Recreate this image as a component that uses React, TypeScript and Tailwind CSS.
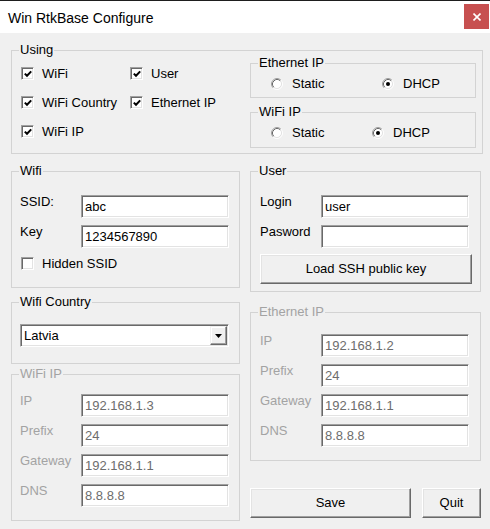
import React from "react";

const FONT = "font-['Liberation_Sans',Arial,sans-serif]";

const GroupBox = ({
  title,
  disabled = false,
  className = "",
  children,
}: {
  title: string;
  disabled?: boolean;
  className?: string;
  children: React.ReactNode;
}) => (
  <fieldset className={`border border-[#d3d3d3] min-w-0 ${className}`}>
    <legend
      className={`ml-[7px] px-[1px] text-[13px] leading-[14px] ${disabled ? "text-[#a3a3a3]" : "text-black"}`}
    >
      {title}
    </legend>
    {children}
  </fieldset>
);

const CheckBox = ({ checked }: { checked: boolean }) => (
  <span className="w-[13px] h-[13px] shrink-0 bg-white border border-t-[#a0a0a0] border-l-[#a0a0a0] border-r-white border-b-white shadow-[inset_1px_1px_0_#696969,inset_-1px_-1px_0_#e3e3e3] flex items-center justify-center">
    {checked && (
      <svg width="8" height="8" viewBox="0 0 8 8" className="ml-[1px] mt-[1px]">
        <path d="M0.8 3.6 L3 5.8 L7.2 1.4" fill="none" stroke="#000" strokeWidth="2" />
      </svg>
    )}
  </span>
);

const Radio = ({ checked }: { checked: boolean }) => (
  <svg width="12" height="12" viewBox="0 0 12 12" className="shrink-0">
    <circle cx="6" cy="6" r="4.5" fill="#fff" />
    <path d="M2.11 9.89 A5.5 5.5 0 0 1 9.89 2.11" fill="none" stroke="#a0a0a0" />
    <path d="M9.89 2.11 A5.5 5.5 0 0 1 2.11 9.89" fill="none" stroke="#ffffff" />
    <path d="M2.82 9.18 A4.5 4.5 0 0 1 9.18 2.82" fill="none" stroke="#696969" />
    <path d="M9.18 2.82 A4.5 4.5 0 0 1 2.82 9.18" fill="none" stroke="#e3e3e3" />
    {checked && <circle cx="6" cy="6" r="2" fill="#000" />}
  </svg>
);

const Edit = ({
  value = "",
  disabled = false,
  className = "",
}: {
  value?: string;
  disabled?: boolean;
  className?: string;
}) => (
  <div
    className={`h-[23px] bg-white border border-t-[#a0a0a0] border-l-[#a0a0a0] border-r-white border-b-white shadow-[inset_1px_1px_0_#696969,inset_-1px_-1px_0_#e3e3e3] pl-[3px] text-[13px] leading-[21px] whitespace-nowrap overflow-hidden ${disabled ? "text-[#6d6d6d]" : "text-black"} ${className}`}
  >
    {value}
  </div>
);

const Button = ({ label, className = "" }: { label: string; className?: string }) => (
  <button
    className={`h-[30px] bg-[#f0f0f0] border border-t-white border-l-white border-r-[#696969] border-b-[#696969] shadow-[inset_-1px_-1px_0_#a0a0a0,inset_1px_1px_0_#e3e3e3] text-[13px] text-black leading-[28px] ${className}`}
  >
    {label}
  </button>
);

const FieldRow = ({
  label,
  value,
  disabled = false,
  className = "",
}: {
  label: string;
  value: string;
  disabled?: boolean;
  className?: string;
}) => (
  <div className={`flex items-start ${className}`}>
    <span
      className={`w-[61px] shrink-0 text-[13px] leading-[13px] whitespace-nowrap ${disabled ? "text-[#a3a3a3]" : "text-black"}`}
    >
      {label}
    </span>
    <Edit value={value} disabled={disabled} className="w-[148px]" />
  </div>
);

const App = () => {
  return (
    <div className={`w-[490px] h-[529px] bg-[#f0f0f0] overflow-hidden text-black ${FONT}`}>
      {/* Title bar */}
      <div className="h-[33px] bg-white border-t border-[#1e1e1e] flex items-start justify-between">
        <span className="pl-2 pt-[8px] text-[14px] leading-[18px]">Win RtkBase Configure</span>
        <div className="mt-[3px] mr-[1px] w-[25px] h-[25px] bg-[#c75050] flex items-center justify-center">
          <svg width="8" height="8" viewBox="0 0 8 8">
            <path d="M0.5 0.5 L7.5 7.5 M7.5 0.5 L0.5 7.5" stroke="#fff" strokeWidth="1.6" />
          </svg>
        </div>
      </div>

      <div className="px-[11px] pt-[10px]">
        {/* Using */}
        <GroupBox title="Using" className="w-[472px]">
          <div className="flex pl-[9px] pr-[6px] pb-[5px]">
            <div className="grid grid-cols-[109px_auto] auto-rows-[29px] pt-[2px] content-start text-[13px]">
              {[
                ["WiFi", true],
                ["User", true],
                ["WiFi Country", true],
                ["Ethernet IP", true],
                ["WiFi IP", true],
              ].map(([name, on]) => (
                <label key={name as string} className="flex items-center gap-[8px] whitespace-nowrap">
                  <CheckBox checked={on as boolean} />
                  <span>{name}</span>
                </label>
              ))}
            </div>
            <div className="ml-auto w-[226px] -mt-[1px] flex flex-col">
              <GroupBox title="Ethernet IP">
                <div className="h-[27px] flex items-center pl-[20px] text-[13px]">
                  <div className="w-[111px] flex items-center gap-[9px]">
                    <Radio checked={false} />
                    <span>Static</span>
                  </div>
                  <div className="flex items-center gap-[9px]">
                    <Radio checked={true} />
                    <span>DHCP</span>
                  </div>
                </div>
              </GroupBox>
              <GroupBox title="WiFi IP" className="mt-[7px]">
                <div className="h-[28px] flex items-center pl-[20px] text-[13px]">
                  <div className="w-[101px] flex items-center gap-[9px]">
                    <Radio checked={false} />
                    <span>Static</span>
                  </div>
                  <div className="flex items-center gap-[9px]">
                    <Radio checked={true} />
                    <span>DHCP</span>
                  </div>
                </div>
              </GroupBox>
            </div>
          </div>
        </GroupBox>

        <div className="flex gap-[10px] mt-[10px]">
          {/* Left column */}
          <div className="w-[230px] flex flex-col">
            <GroupBox title="Wifi">
              <div className="pl-[8px] pr-[10px] pt-[17px] pb-[12px]">
                <FieldRow label="SSID:" value="abc" />
                <FieldRow label="Key" value="1234567890" className="mt-[7px]" />
                <label className="mt-[4px] h-[23px] pl-[1px] flex items-center gap-[8px] text-[13px]">
                  <CheckBox checked={false} />
                  <span>Hidden SSID</span>
                </label>
              </div>
            </GroupBox>

            <GroupBox title="Wifi Country" className="mt-[7px]">
              <div className="pl-[8px] pr-[10px] pt-[15px] pb-[16px]">
                <div className="h-[23px] w-[209px] bg-white border border-t-[#a0a0a0] border-l-[#a0a0a0] border-r-white border-b-white shadow-[inset_1px_1px_0_#696969,inset_-1px_-1px_0_#e3e3e3] flex items-center justify-between pl-[3px] pr-[1px] text-[13px]">
                  <span>Latvia</span>
                  <span className="w-[17px] h-[19px] bg-[#f0f0f0] border border-t-[#f0f0f0] border-l-[#f0f0f0] border-r-[#696969] border-b-[#696969] shadow-[inset_-1px_-1px_0_#a0a0a0,inset_1px_1px_0_#fff] flex items-center justify-center">
                    <svg width="7" height="4" viewBox="0 0 7 4">
                      <path d="M0 0 H7 L3.5 4 Z" fill="#000" />
                    </svg>
                  </span>
                </div>
              </div>
            </GroupBox>

            <GroupBox title="WiFi IP" disabled className="mt-[3px]">
              <div className="pl-[8px] pr-[10px] pt-[13px] pb-[13px]">
                <FieldRow label="IP" value="192.168.1.3" disabled />
                <FieldRow label="Prefix" value="24" disabled className="mt-[7px]" />
                <FieldRow label="Gateway" value="192.168.1.1" disabled className="mt-[7px]" />
                <FieldRow label="DNS" value="8.8.8.8" disabled className="mt-[7px]" />
              </div>
            </GroupBox>
          </div>

          {/* Right column */}
          <div className="w-[231px] flex flex-col">
            <GroupBox title="User">
              <div className="pl-[9px] pt-[17px] pb-[7px]">
                <FieldRow label="Login" value="user" />
                <FieldRow label="Pasword" value="" className="mt-[7px]" />
                <Button label="Load SSH public key" className="mt-[6px] w-[212px]" />
              </div>
            </GroupBox>

            <GroupBox title="Ethernet IP" disabled className="mt-[13px]">
              <div className="pl-[9px] pt-[15px] pb-[13px]">
                <FieldRow label="IP" value="192.168.1.2" disabled />
                <FieldRow label="Prefix" value="24" disabled className="mt-[7px]" />
                <FieldRow label="Gateway" value="192.168.1.1" disabled className="mt-[7px]" />
                <FieldRow label="DNS" value="8.8.8.8" disabled className="mt-[7px]" />
              </div>
            </GroupBox>

            <div className="flex mt-[27px]">
              <Button label="Save" className="w-[162px]" />
              <Button label="Quit" className="w-[59px] ml-[11px] shrink-0" />
            </div>
          </div>
        </div>
      </div>
    </div>
  );
};

export default App;
